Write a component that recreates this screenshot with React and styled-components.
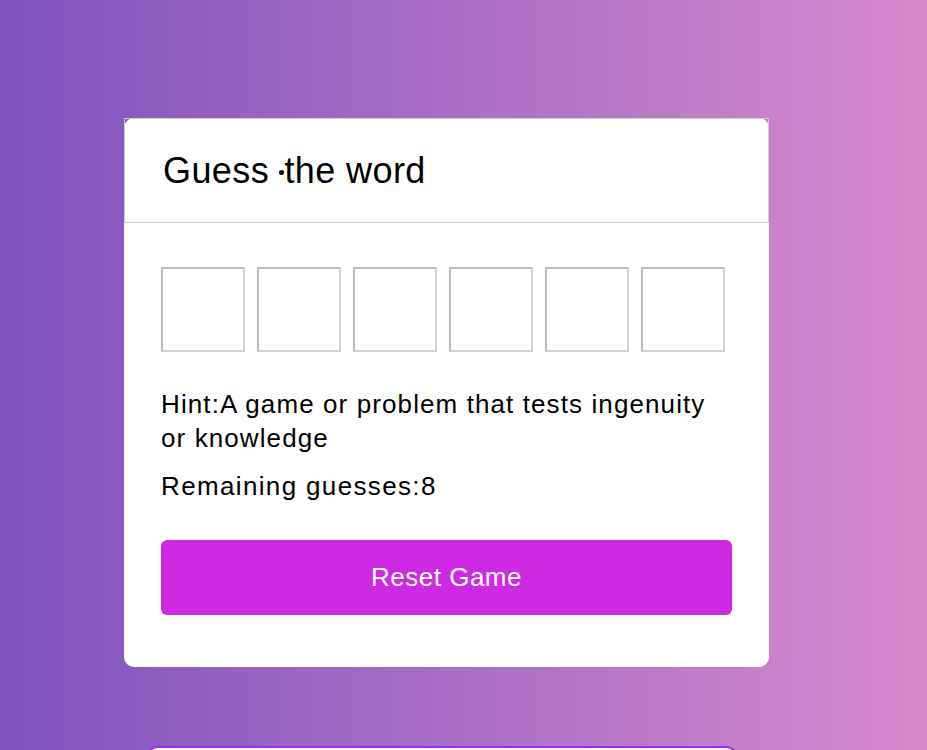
import React, { useState } from 'react';
import styled, { createGlobalStyle } from 'styled-components';

const GlobalStyle = createGlobalStyle`
  html, body {
    margin: 0;
    padding: 0;
    height: 100%;
  }
  body {
    font-family: "Liberation Sans", Arial, sans-serif;
    background: linear-gradient(90deg, #7e54bd 0%, #d78acd 100%);
    overflow: hidden;
  }
`;

const Page = styled.div`
  height: 750px;
  display: flex;
  flex-direction: column;
  align-items: flex-start;
  padding: 118px 0 0 124px;
  box-sizing: border-box;
  overflow: hidden;
`;

const Card = styled.div`
  width: 645px;
  background: #fff;
  border-radius: 10px;
  flex-shrink: 0;
`;

const Header = styled.div`
  border: 1px solid #cccccc;
  padding: 31px 38px;
`;

const Title = styled.h1`
  margin: 0;
  font-size: 36px;
  font-weight: 400;
  letter-spacing: 0.4px;
  color: #000;
  line-height: 41px;
`;

const Dot = styled.span`
  display: inline-block;
  width: 5px;
  height: 5px;
  border-radius: 50%;
  background: #000;
  margin: 0 0 0 0;
  vertical-align: 8px;
`;

const Body = styled.div`
  padding: 44px 37px 52px;
`;

const Boxes = styled.div`
  display: flex;
  gap: 12px;
`;

const LetterBox = styled.input`
  width: 80px;
  height: 81px;
  padding: 0;
  margin: 0;
  border: 2px solid;
  border-color: #bcbcbc #d4d4d4 #d4d4d4 #bcbcbc;
  background: #fff;
  font-family: inherit;
  font-size: 32px;
  text-align: center;
  text-transform: uppercase;
  outline: none;
  box-sizing: content-box;
`;

const Text = styled.p`
  margin: ${(p) => p.$top}px 0 0;
  font-size: 26px;
  letter-spacing: ${(p) => p.$spacing}px;
  line-height: 34px;
  color: #000;
`;

const ResetButton = styled.button`
  display: block;
  width: 100%;
  height: 75px;
  margin-top: 37px;
  border: none;
  border-radius: 6px;
  background: #cf2ae3;
  color: #fff;
  font-family: "Liberation Sans", Arial, sans-serif;
  font-size: 26px;
  letter-spacing: 0.5px;
  cursor: pointer;
`;

const NextPanel = styled.div`
  width: 588px;
  height: 40px;
  margin: 79px 0 0 22px;
  background: #fff;
  border: 2px solid #9a2df1;
  border-radius: 12px;
  flex-shrink: 0;
`;

export default function App() {
  const [letters, setLetters] = useState(['', '', '', '', '', '']);
  const [remaining, setRemaining] = useState(8);

  const update = (i, v) => {
    const next = [...letters];
    next[i] = v.slice(-1);
    setLetters(next);
  };

  const reset = () => {
    setLetters(['', '', '', '', '', '']);
    setRemaining(8);
  };

  return (
    <>
      <GlobalStyle />
      <Page>
        <Card>
          <Header>
            <Title>
              Guess <Dot />the word
            </Title>
          </Header>
          <Body>
            <Boxes>
              {letters.map((l, i) => (
                <LetterBox key={i} value={l} maxLength={1} onChange={(e) => update(i, e.target.value)} />
              ))}
            </Boxes>
            <Text $top={35} $spacing={1.1}>Hint:A game or problem that tests ingenuity or knowledge</Text>
            <Text $top={14} $spacing={1.35}>Remaining guesses:{remaining}</Text>
            <ResetButton onClick={reset}>Reset Game</ResetButton>
          </Body>
        </Card>
        <NextPanel />
      </Page>
    </>
  );
}
